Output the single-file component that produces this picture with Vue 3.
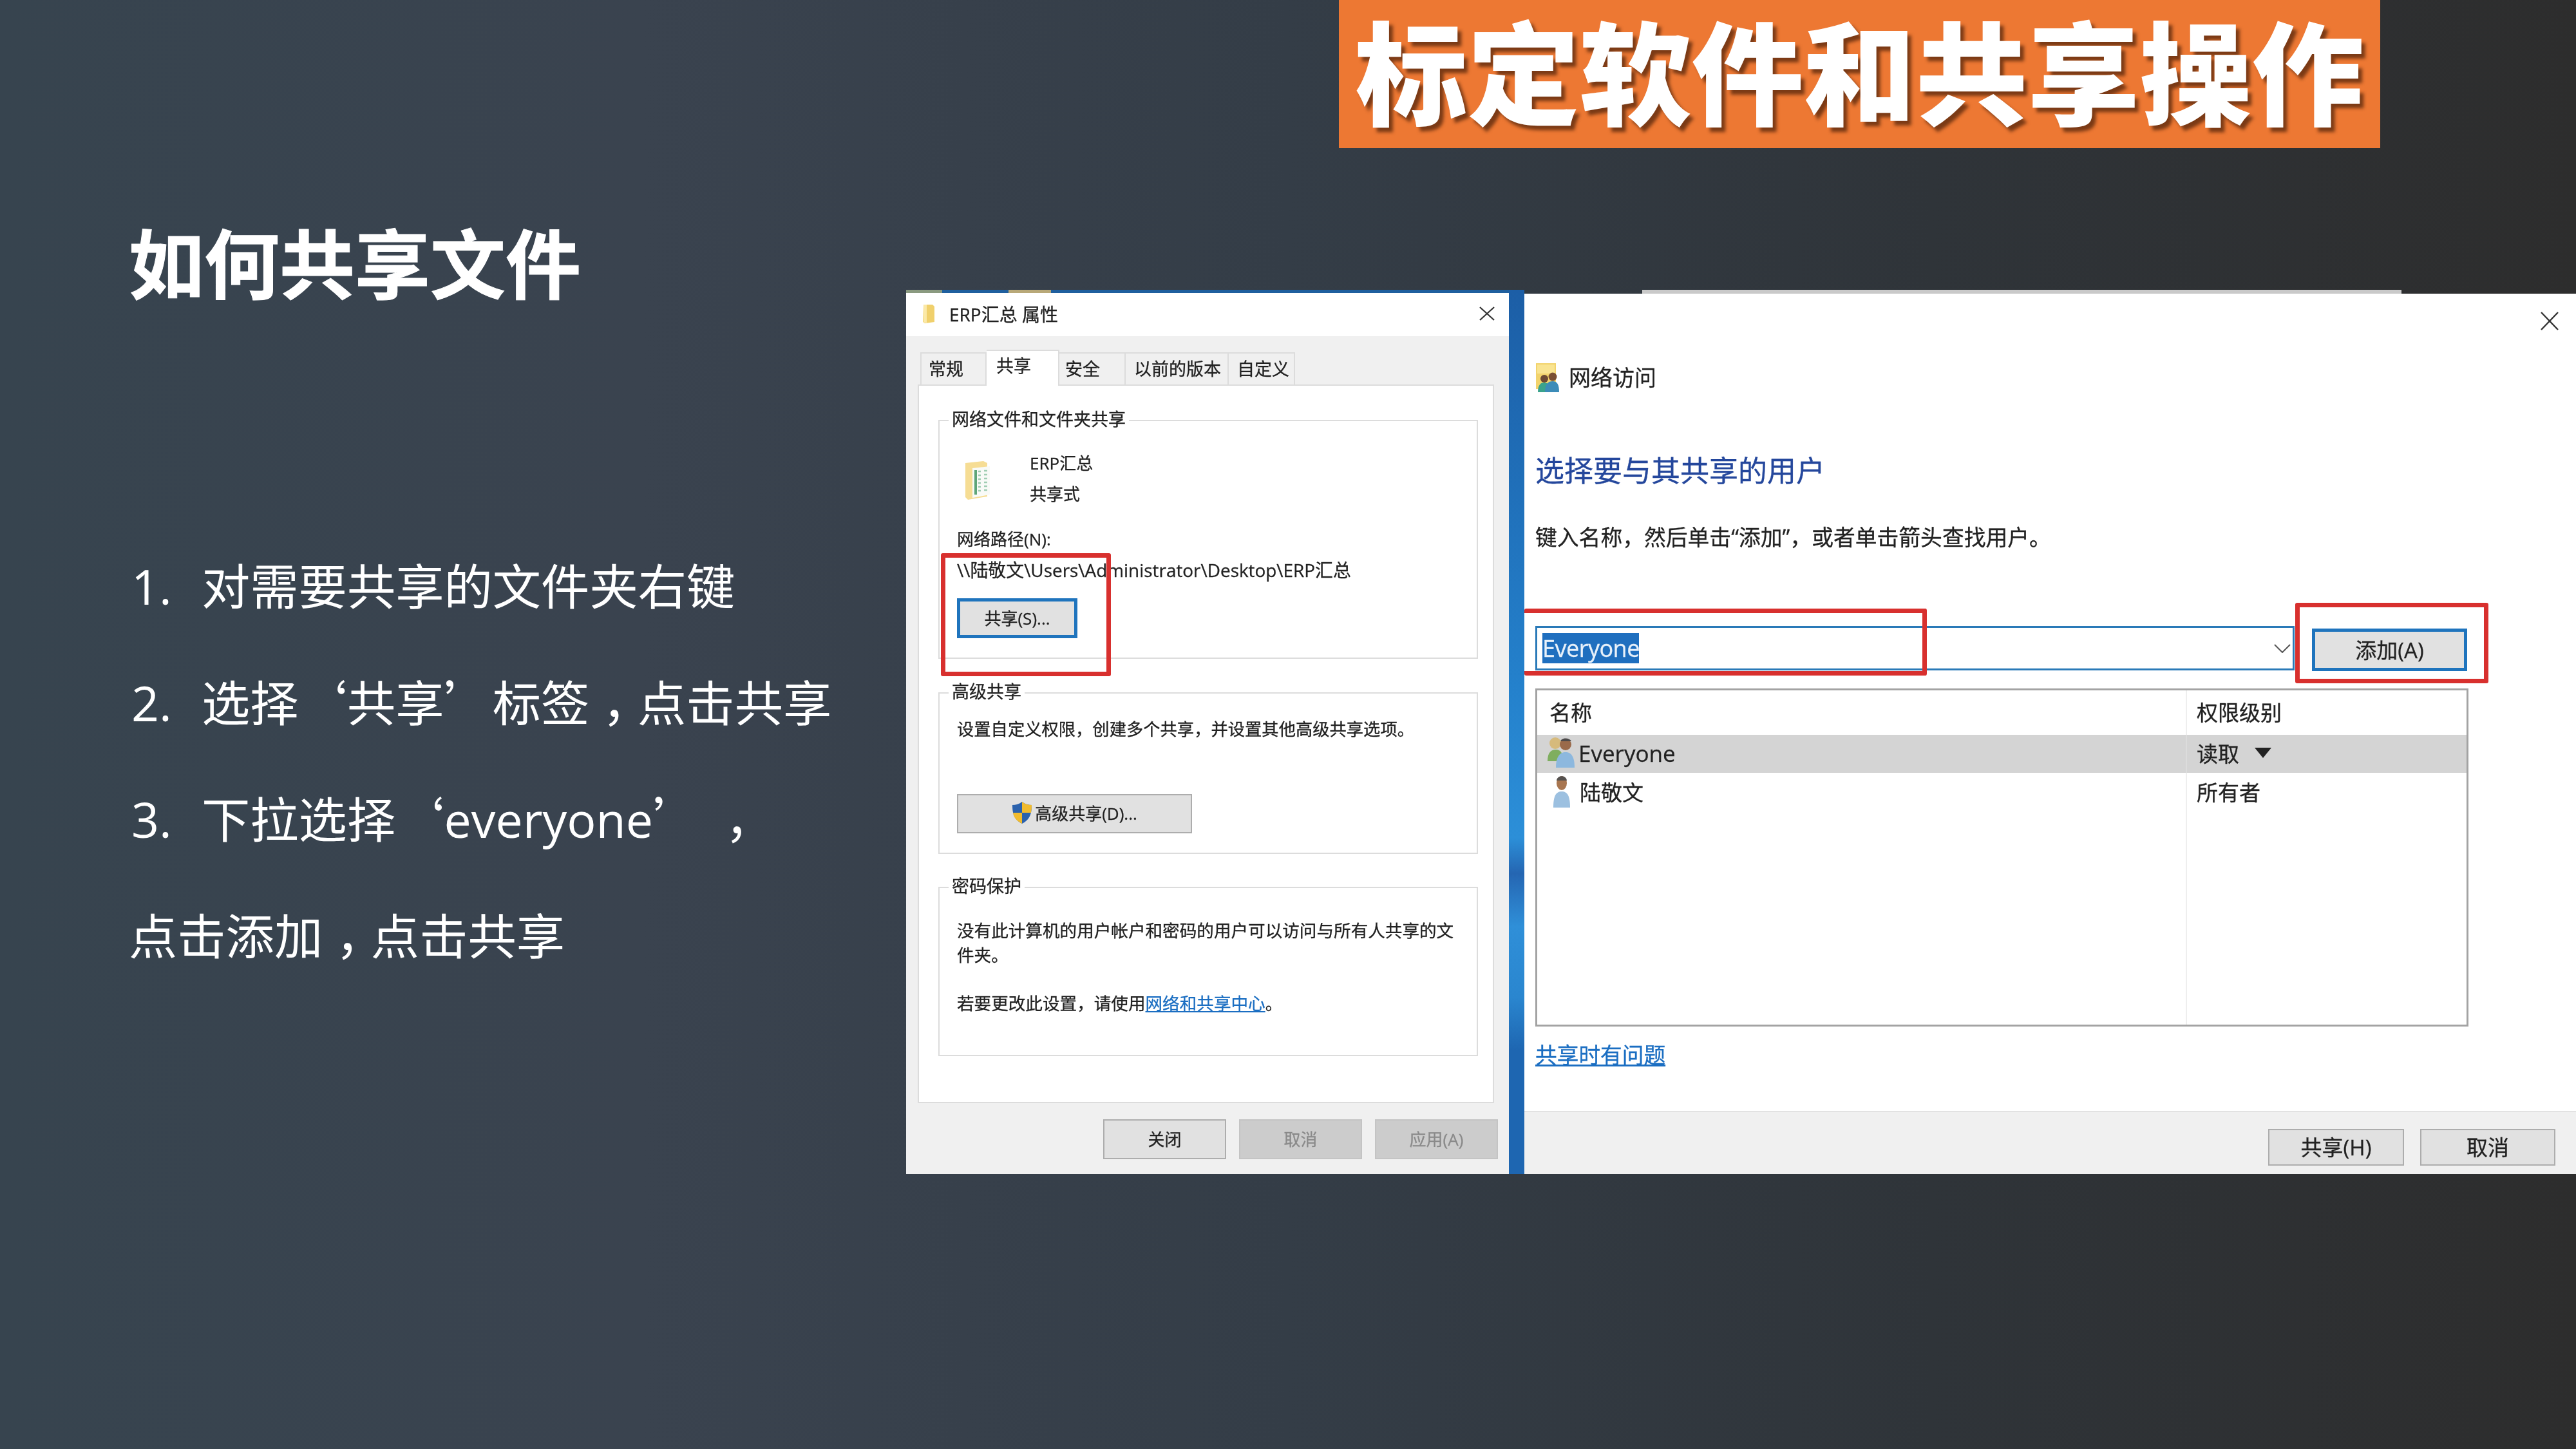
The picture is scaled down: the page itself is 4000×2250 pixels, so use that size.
<script setup>
const tabs = [
  { name: '常规', w: 103, pad: 11 },
  { name: '共享', w: 113, pad: 15, active: true },
  { name: '安全', w: 103, pad: 9 },
  { name: '以前的版本', w: 160, pad: 13 },
  { name: '自定义', w: 103, pad: 13 }
]
</script>

<template>
  <div class="slide" lang="zh-CN">
    <section class="intro">
      <h1>如何共享文件</h1>
      <div class="steps">
        <p><span class="num">1.</span>对需要共享的文件夹右键</p>
        <p><span class="num">2.</span>选择‘共享’标签<span class="comma">，</span>点击共享</p>
        <p><span class="num">3.</span>下拉选择‘<span class="latin">everyone</span>’ <span class="comma">，</span></p>
        <p>点击添加<span class="comma">，</span>点击共享</p>
      </div>
    </section>

    <section class="stage">
      <div class="banner">标定软件和共享操作</div>
      <div class="shots">
        <div class="props">
          <div class="props-strip"></div>
          <div class="titlebar">
            <svg class="mini-folder" viewBox="0 0 20 29"><path d="M2 0h14l3 3v24l-15 2-3-2z" fill="#f0d06c"/><path d="M2 0h5v28H2z" fill="#fbe9a8"/></svg>
            <span>ERP汇总 属性</span>
            <svg class="close" viewBox="0 0 26 22"><path d="M2 1l22 20M24 1L2 21" stroke="#333" stroke-width="2.2" fill="none"/></svg>
          </div>
          <div class="tabs">
            <div
              v-for="t in tabs"
              :key="t.name"
              class="tab"
              :class="{ active: t.active }"
              :style="{ width: t.w + 'px', paddingLeft: t.pad + 'px' }"
            >{{ t.name }}</div>
          </div>
          <div class="panel">
            <div class="grp grp-net">
              <span class="legend">网络文件和文件夹共享</span>
              <div class="file-row">
                <svg class="big-folder" viewBox="0 0 44 60">
                  <path d="M0 3l28-3 6 3v52l-30 5-4-4z" fill="#f6dd94"/>
                  <path d="M11 11l27-3v44l-27 5z" fill="#f8faf7"/>
                  <path d="M14 14h4v38h-4z" fill="#5fa578"/>
                  <path d="M20 16h4M20 22h4M20 28h4M20 34h4M20 40h4M20 46h4M29 15h5M29 21h5M29 27h5M29 33h5M29 39h5M29 45h5" stroke="#9fcdb2" stroke-width="2.500" fill="none"/>
                </svg>
                <div class="file-meta">
                  <div>ERP汇总</div>
                  <div>共享式</div>
                </div>
              </div>
              <div class="path-label">网络路径(N):</div>
              <div class="path-value">\\陆敬文\Users\Administrator\Desktop\ERP汇总</div>
              <button class="btn focus share-btn">共享(S)...</button>
            </div>

            <div class="grp grp-adv">
              <span class="legend">高级共享</span>
              <p class="adv-text">设置自定义权限，创建多个共享，并设置其他高级共享选项。</p>
              <button class="btn adv-btn">
                <svg class="shield" viewBox="0 0 32 34">
                  <path d="M16 0C11 4 6 5 1 5c0 14 3 23 15 29 12-6 15-15 15-29-5 0-10-1-15-5z" fill="#2b62ad"/>
                  <path d="M16 0c5 4 10 5 15 5 0 4-.3 8-1 12H16zM16 17v17C7 29.500 3 24 2 17z" fill="#f1bb2e"/>
                </svg>
                高级共享(D)...
              </button>
            </div>

            <div class="grp grp-pwd">
              <span class="legend">密码保护</span>
              <p class="pwd-text">没有此计算机的用户帐户和密码的用户可以访问与所有人共享的文<br>件夹。</p>
              <p class="pwd-link">若要更改此设置，请使用<a>网络和共享中心</a>。</p>
            </div>
          </div>
          <div class="props-foot">
            <button class="btn foot-btn">关闭</button>
            <button class="btn foot-btn off">取消</button>
            <button class="btn foot-btn off">应用(A)</button>
          </div>
          <div class="red red-path"></div>
        </div>

        <div class="bar"></div>

        <div class="share">
          <div class="strip"></div>
          <div class="dialog">
            <div class="close-row">
              <svg class="close-lg" viewBox="0 0 30 29"><path d="M2 1l26 27M28 1L2 28" stroke="#333" stroke-width="2.4" fill="none"/></svg>
            </div>
            <div class="body">
              <div class="head">
                <svg class="net-icon" viewBox="0 0 38 45">
                  <path d="M1 0h31v40H1z" fill="#f2d36c"/>
                  <path d="M3 2h27v14H3z" fill="#f9e491"/>
                  <circle cx="14" cy="24" r="6" fill="#6d4a33"/>
                  <circle cx="27" cy="21" r="6.500" fill="#7a4f33"/>
                  <path d="M4 45c0-11 4-15 10-15s9 5 9 15z" fill="#3aa38c"/>
                  <path d="M15 45c0-13 5-17 12-17s10 5 10 17z" fill="#3c8cb8"/>
                </svg>
                <span>网络访问</span>
              </div>
              <h2>选择要与其共享的用户</h2>
              <p class="hint">键入名称，然后单击“添加”，或者单击箭头查找用户。</p>
              <div class="combo-row">
                <div class="combo">
                  <span class="sel">Everyone</span>
                  <svg class="chev" viewBox="0 0 26 14"><path d="M1 1l12 12L25 1" stroke="#555" stroke-width="2" fill="none"/></svg>
                </div>
                <button class="btn focus add-btn">添加(A)</button>
              </div>
              <div class="table">
                <div class="row row-head">
                  <div class="c1">名称</div>
                  <div class="c2">权限级别</div>
                </div>
                <div class="row row-sel">
                  <div class="c1">
                    <svg class="user-icon" viewBox="0 0 44 54">
                      <circle cx="13" cy="12" r="9" fill="#d6ba7c"/>
                      <path d="M1 40c0-13 5-18 13-18s11 6 11 18z" fill="#7fae5f"/>
                      <circle cx="29" cy="14" r="9" fill="#9a6a4a"/>
                      <path d="M21 9c2-6 14-6 17 0z" fill="#4d4a4a"/>
                      <path d="M14 50c0-17 6-24 15-24s14 7 14 24z" fill="#8db8de"/>
                    </svg>
                    Everyone
                  </div>
                  <div class="c2">读取<span class="caret"></span></div>
                </div>
                <div class="row row-user">
                  <div class="c1">
                    <svg class="user-icon single" viewBox="0 0 28 50">
                      <ellipse cx="14" cy="12" rx="8" ry="11" fill="#a87650"/>
                      <path d="M6 8c1-9 15-9 16 0z" fill="#55514f"/>
                      <path d="M1 50c0-18 4-25 13-25s13 7 13 25z" fill="#9cc0e0"/>
                    </svg>
                    陆敬文
                  </div>
                  <div class="c2">所有者</div>
                </div>
                <div class="row row-fill">
                  <div class="c1"></div>
                  <div class="c2"></div>
                </div>
              </div>
              <a class="trouble">共享时有问题</a>
            </div>
            <div class="dialog-foot">
              <button class="btn share-foot wide">共享(H)</button>
              <button class="btn share-foot">取消</button>
            </div>
          </div>
          <div class="red red-input"></div>
          <div class="red red-add"></div>
        </div>
      </div>
    </section>
  </div>
</template>

<style>
html,
body {
  margin: 0;
  background: #333;
}
</style>

<style scoped>
.slide {
  width: 4000px;
  height: 2250px;
  display: flex;
  overflow: hidden;
  background: linear-gradient(90deg, #37444f 0%, #3a434f 25%, #343d47 50%, #2f3439 75%, #2d2d2d 100%);
  font-family: "Noto Sans CJK SC", sans-serif;
  color: #fff;
}

.intro {
  width: 1407px;
  flex: none;
  box-sizing: border-box;
  padding: 314px 0 0 200px;
}

h1 {
  margin: 0;
  font-size: 117px;
  line-height: 180px;
  font-weight: 700;
  -webkit-text-stroke: 1px #fff;
}

.steps {
  margin-top: 324px;
  font-size: 75.300px;
  line-height: 178px;
  font-weight: 400;
  white-space: pre;
}

.steps p {
  margin: 0;
}

.num {
  display: inline-block;
  width: 113px;
  padding-left: 4px;
  box-sizing: border-box;
  font-family: "Open Sans", sans-serif;
}

.latin {
  font-family: "Open Sans", sans-serif;
}

/* half-width comma glyph, padded back out to one em so it sits mid-cell */
.comma {
  font-feature-settings: "halt";
  padding: 0 17px 0 20px;
}

.stage {
  flex: 1;
  min-width: 0;
}

.banner {
  margin-left: 672px;
  width: 1617px;
  height: 230px;
  background: #ed7833;
  text-align: center;
  font-size: 174px;
  font-weight: 900;
  line-height: 211px;
  white-space: nowrap;
  text-shadow: 6px 7px 5px rgba(84, 38, 12, 0.75);
}

.shots {
  margin-top: 220px;
  height: 1373px;
  display: flex;
  color: #222;
  font-family: "Open Sans", "Noto Sans CJK SC", sans-serif;
  font-size: 26px;
  -webkit-text-stroke: 0.3px currentColor;
  filter: blur(0.6px);
}

.props {
  width: 936px;
  flex: none;
  position: relative;
  background: #f0f0f0;
}

.props-strip {
  height: 5px;
  background: linear-gradient(90deg, #8a9a80 0, #8a9a80 6%, #1f5f9e 6%, #1f5f9e 17%, #b8a878 17%, #b8a878 24%, #1f5f9e 24%);
}

.titlebar {
  height: 67px;
  box-sizing: border-box;
  background: #fff;
  display: flex;
  align-items: center;
  padding: 0 21px 3px 25px;
  font-size: 28px;
}

.mini-folder {
  width: 20px;
  height: 29px;
  margin-right: 22px;
}

.close {
  width: 26px;
  height: 22px;
  margin-left: auto;
}

.tabs {
  display: flex;
  align-items: flex-end;
  height: 50px;
  margin-top: 25px;
  padding-left: 22px;
  position: relative;
  z-index: 1;
}

.tab {
  height: 50px;
  box-sizing: border-box;
  border: 2px solid #dcdcdc;
  border-bottom: none;
  border-left-width: 0;
  background: #f0f0f0;
  display: flex;
  align-items: center;
  padding-bottom: 3px;
  font-size: 27px;
  white-space: nowrap;
}

.tab:first-child {
  border-left-width: 2px;
}

.tab.active {
  height: 56px;
  margin-bottom: -2px;
  background: #fff;
  padding-bottom: 12px;
}

.panel {
  margin-left: 18px;
  width: 895px;
  height: 1116px;
  box-sizing: border-box;
  border: 2px solid #dcdcdc;
  background: #fff;
  padding: 53px 23px 0 30px;
}

.grp {
  position: relative;
  box-sizing: border-box;
  border: 2px solid #dcdcdc;
  padding-left: 27px;
}

.legend {
  position: absolute;
  top: -21px;
  left: 14px;
  padding: 0 5px;
  background: #fff;
  font-size: 27px;
  line-height: 36px;
}

.grp-net {
  height: 371px;
  padding-top: 41px;
}

.grp-adv {
  height: 251px;
  margin-top: 52px;
  padding-top: 35px;
}

.grp-pwd {
  height: 263px;
  margin-top: 51px;
  padding-top: 47px;
}

.file-row {
  display: flex;
  align-items: center;
  padding-left: 12px;
}

.big-folder {
  width: 46px;
  height: 60px;
  margin: 6px 55px 0 0;
}

.file-meta {
  line-height: 48px;
}

.path-label {
  margin-top: 22px;
  line-height: 48px;
}

.path-value {
  line-height: 48px;
  font-size: 27.900px;
  white-space: nowrap;
}

.btn {
  display: flex;
  align-items: center;
  justify-content: center;
  box-sizing: border-box;
  border: 2px solid #adadad;
  background: #e1e1e1;
  color: #222;
  font: inherit;
  padding: 0 0 3px;
}

.btn.focus {
  border: 5px solid #1f74bd;
}

.share-btn {
  width: 187px;
  height: 62px;
  margin-top: 20px;
}

.adv-text {
  margin: 0;
  line-height: 40px;
  font-size: 26.300px;
  white-space: nowrap;
}

.adv-btn {
  width: 365px;
  height: 61px;
  margin-top: 81px;
}

.shield {
  width: 32px;
  height: 34px;
  margin-right: 4px;
}

.pwd-text,
.pwd-link {
  margin: 0;
  line-height: 38px;
  font-size: 26.600px;
  white-space: nowrap;
}

.pwd-link {
  margin-top: 37px;
}

.pwd-link a,
.trouble {
  color: #1b6ec2;
  text-decoration: underline;
}

.props-foot {
  display: flex;
  justify-content: flex-end;
  gap: 20px;
  margin-top: 25px;
  padding-right: 17px;
}

.foot-btn {
  width: 191px;
  height: 62px;
}

.foot-btn.off {
  background: #cccccc;
  border-color: #c4c4c4;
  color: #8a8a8a;
}

.bar {
  width: 24px;
  flex: none;
  background: linear-gradient(180deg, #1c5ea6 0%, #2481cc 45%, #2c8fd8 62%, #2566b2 66%, #2f8fd8 72%, #2a86cf 80%, #1e66b1 86%, #1e66b1 100%);
}

.share {
  flex: 1;
  min-width: 0;
  position: relative;
  display: flex;
  flex-direction: column;
}

.strip {
  height: 6px;
  flex: none;
  margin-left: 183px;
  width: 1179px;
  background: #c9c9c9;
}

.dialog {
  flex: 1;
  display: flex;
  flex-direction: column;
  background: #fff;
}

.close-row {
  display: flex;
  justify-content: flex-end;
  padding: 28px 26px 0 0;
}

.close-lg {
  width: 30px;
  height: 29px;
}

.body {
  padding: 51px 0 0 17px;
  font-size: 33px;
}

.head {
  display: flex;
  align-items: center;
  height: 45px;
  font-size: 34px;
}

.head span {
  padding-bottom: 4px;
}

.net-icon {
  width: 38px;
  height: 45px;
  margin-right: 14px;
}

h2 {
  margin: 92px 0 0;
  font-size: 45px;
  line-height: 60px;
  font-weight: 400;
  color: #24479c;
}

.hint {
  margin: 48px 0 0;
  font-size: 33.800px;
  line-height: 50px;
  white-space: nowrap;
}

.combo-row {
  display: flex;
  align-items: flex-start;
  gap: 27px;
  margin-top: 113px;
}

.combo {
  width: 1179px;
  height: 69px;
  box-sizing: border-box;
  border: 3px solid #2a7ab8;
  display: flex;
  align-items: center;
  padding: 0 3px 0 8px;
}

.sel {
  background: #1f6fbf;
  color: #e8f1fa;
  font-size: 36px;
  line-height: 47px;
  width: 150px;
  letter-spacing: -0.500px;
}

.chev {
  width: 26px;
  height: 14px;
  margin-left: auto;
}

.add-btn {
  width: 241px;
  height: 66px;
  margin-top: 4px;
  border-width: 6px;
  font-size: 33px;
}

.table {
  width: 1449px;
  height: 525px;
  margin-top: 27px;
  box-sizing: border-box;
  border: 3px solid #a3a3a3;
  display: flex;
  flex-direction: column;
}

.row {
  display: flex;
  flex: none;
}

.c1 {
  width: 1007px;
  flex: none;
  display: flex;
  align-items: center;
  box-sizing: border-box;
  padding: 0 0 3px 19px;
}

.c2 {
  flex: 1;
  display: flex;
  align-items: center;
  border-left: 2px solid #eeeeee;
  padding: 0 0 3px 15px;
}

.row-head {
  height: 69px;
}

.row-sel {
  height: 59px;
  background: #d4d4d4;
  font-size: 35px;
}

.row-sel .c2 {
  font-size: 33px;
  border-left-color: #dcdcdc;
}

.row-user {
  height: 60px;
}

.row-fill {
  flex: 1;
}

.user-icon {
  width: 44px;
  height: 54px;
  margin-right: 5px;
}

.row-sel .c1 {
  padding-left: 15px;
}

.user-icon.single {
  width: 28px;
  height: 50px;
  margin: 0 14px 0 5px;
}

.caret {
  width: 0;
  height: 0;
  margin-left: 24px;
  border-left: 13px solid transparent;
  border-right: 13px solid transparent;
  border-top: 16px solid #222;
}

.trouble {
  display: inline-block;
  margin-top: 22px;
  font-size: 33.700px;
  line-height: 44px;
}

.dialog-foot {
  margin-top: auto;
  height: 98px;
  box-sizing: border-box;
  border-top: 2px solid #e2e2e2;
  background: #f0f0f0;
  display: flex;
  justify-content: flex-end;
  gap: 25px;
  padding: 26px 32px 0 0;
}

.share-foot {
  width: 210px;
  height: 57px;
  font-size: 33px;
}

.share-foot.wide {
  width: 211px;
}

.red {
  position: absolute;
  box-sizing: border-box;
  border: 7px solid #d8302e;
  border-radius: 3px;
  pointer-events: none;
}

.red-path {
  left: 54px;
  top: 409px;
  width: 264px;
  height: 191px;
}

.red-input {
  left: 0;
  top: 495px;
  width: 625px;
  height: 104px;
  border-left: none;
}

.red-add {
  left: 1197px;
  top: 486px;
  width: 300px;
  height: 125px;
}
</style>
